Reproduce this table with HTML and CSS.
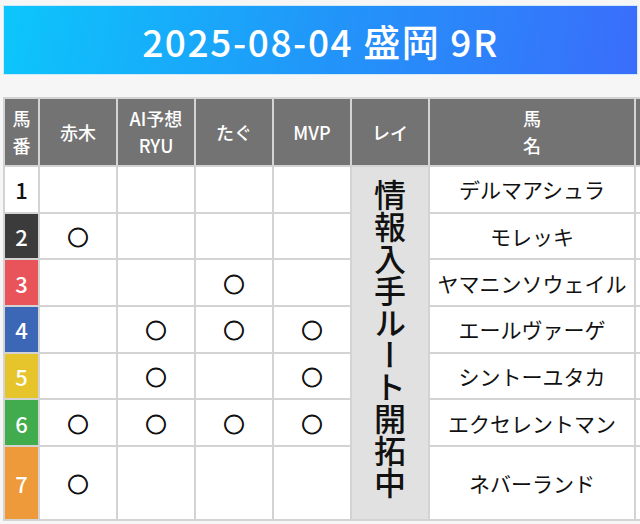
FILE: index.html
```html
<!DOCTYPE html>
<html lang="ja">
<head>
<meta charset="utf-8">
<title>2025-08-04 盛岡 9R</title>
<link rel="stylesheet" href="styles.css">
</head>
<body>
<div class="page">
  <header class="banner"><h1 class="title">2025-08-04 盛岡 9R</h1></header>
  <div class="table-wrap">
    <table class="race">
      <thead>
        <tr>
          <th class="col-num">馬<br>番</th>
          <th class="col-p">赤木</th>
          <th class="col-p">AI予想<br>RYU</th>
          <th class="col-p">たぐ</th>
          <th class="col-p">MVP</th>
          <th class="col-p">レイ</th>
          <th class="col-name">馬<br>名</th>
          <th class="col-extra">&nbsp;</th>
        </tr>
      </thead>
      <tbody>
        <tr class="row">
          <td class="num n1">1</td>
          <td class="mark"></td><td class="mark"></td><td class="mark"></td><td class="mark"></td>
          <td class="rei" rowspan="7"><span class="rei-text">情報入手ルート開拓中</span></td>
          <td class="name">デルマアシュラ</td><td class="extra"></td>
        </tr>
        <tr class="row">
          <td class="num n2">2</td>
          <td class="mark">○</td><td class="mark"></td><td class="mark"></td><td class="mark"></td>
          <td class="name">モレッキ</td><td class="extra"></td>
        </tr>
        <tr class="row">
          <td class="num n3">3</td>
          <td class="mark"></td><td class="mark"></td><td class="mark">○</td><td class="mark"></td>
          <td class="name">ヤマニンソウェイル</td><td class="extra"></td>
        </tr>
        <tr class="row">
          <td class="num n4">4</td>
          <td class="mark"></td><td class="mark">○</td><td class="mark">○</td><td class="mark">○</td>
          <td class="name">エールヴァーゲ</td><td class="extra"></td>
        </tr>
        <tr class="row">
          <td class="num n5">5</td>
          <td class="mark"></td><td class="mark">○</td><td class="mark"></td><td class="mark">○</td>
          <td class="name">シントーユタカ</td><td class="extra"></td>
        </tr>
        <tr class="row">
          <td class="num n6">6</td>
          <td class="mark">○</td><td class="mark">○</td><td class="mark">○</td><td class="mark">○</td>
          <td class="name">エクセレントマン</td><td class="extra"></td>
        </tr>
        <tr class="row last">
          <td class="num n7">7</td>
          <td class="mark">○</td><td class="mark"></td><td class="mark"></td><td class="mark"></td>
          <td class="name">ネバーランド</td><td class="extra"></td>
        </tr>
      </tbody>
    </table>
  </div>
</div>
</body>
</html>
```
FILE: styles.css
```css
html, body {
  margin: 0;
  padding: 0;
  overflow: hidden;
}
body {
  background: #f6f6f6;
  font-family: "Noto Sans CJK JP", "Noto Sans", sans-serif;
  color: #111;
}
.page {
  padding: 5px 2px 0 3px;
}
.banner {
  height: 68px;
  border: 1px solid #cfeaf8;
  background: linear-gradient(100deg, #0cc6fb 0%, #2196f9 50%, #3a6dfb 100%);
  display: flex;
  align-items: center;
  justify-content: center;
}
.title {
  margin: 0;
  color: #fff;
  font-size: 37px;
  font-weight: 500;
  letter-spacing: 1.6px;
  line-height: 1;
  padding-top: 2px;
}
.table-wrap {
  margin-top: 22px;
  width: 640px;
  overflow: hidden;
}
.race {
  border-collapse: separate;
  border-spacing: 2px;
  background: #d3d3d3;
  table-layout: fixed;
  width: 685px;
}
.race th {
  background: #737373;
  color: #fff;
  font-weight: 500;
  font-size: 18px;
  line-height: 27px;
  height: 66px;
  padding: 0;
  text-align: center;
  vertical-align: middle;
}
.col-num { width: 33px; }
.col-p { width: 76px; }
.col-name { width: 204px; }
.col-extra { width: 50px; }
.race td {
  background: #fff;
  padding: 0;
  text-align: center;
  vertical-align: middle;
}
.row { height: 44.7px; }
.row.last { height: 72px; }
.num {
  font-size: 22px;
  font-weight: 500;
  color: #fff;
}
.n1 { background: #fff !important; color: #111; }
.n2 { background: #3b3b3b !important; }
.n3 { background: #e8545a !important; }
.n4 { background: #3b67b6 !important; }
.n5 { background: #e6c42c !important; }
.n6 { background: #41ac4d !important; }
.n7 { background: #ee993a !important; }
.mark {
  font-size: 21px;
  font-weight: 700;
  color: #111;
  -webkit-text-stroke: 0.9px #111;
}
.name {
  font-size: 21px;
  color: #111;
}
.race td.rei {
  background: #e1e1e1;
  vertical-align: top;
  padding-top: 12px;
}
.rei-text {
  display: inline-block;
  writing-mode: vertical-rl;
  font-size: 32px;
  font-weight: 500;
  line-height: 1;
  color: #111;
}
```
